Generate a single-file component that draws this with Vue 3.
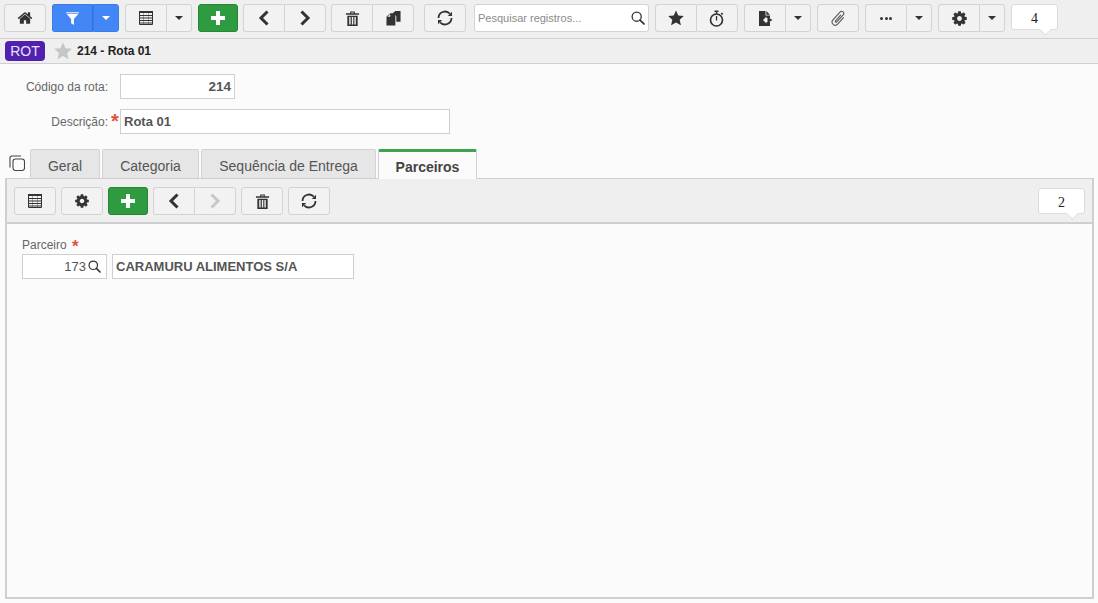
<script setup>
const tabs = [
  { label: 'Geral', width: 70 },
  { label: 'Categoria', width: 97 },
  { label: 'Sequência de Entrega', width: 175 },
  { label: 'Parceiros', width: 99, active: true }
]
</script>

<template>
  <div class="page">
    <svg class="defs" aria-hidden="true">
      <symbol id="i-home" viewBox="0 0 1792 1792"><path d="M1472 992v480q0 26-19 45t-45 19h-384v-384h-256v384h-384q-26 0-45-19t-19-45v-480q0-1 .5-3t.5-3l575-474 575 474q1 2 1 6zm223-69l-62 74q-8 9-21 11h-3q-13 0-21-7l-692-577-692 577q-12 8-24 7-13-2-21-11l-62-74q-8-10-7-23.5t11-21.5l719-599q32-26 76-26t76 26l244 204v-195q0-14 9-23t23-9h192q14 0 23 9t9 23v408l219 182q10 8 11 21.5t-7 23.5z"/></symbol>
      <symbol id="i-star" viewBox="0 0 16 16"><path d="M8 .4l2.300 5.100 5.500.6-4.100 3.700 1.200 5.500L8 12.500l-4.900 2.800 1.200-5.500L.2 6.100l5.500-.6z"/></symbol>
      <symbol id="i-cog" viewBox="0 0 1792 1792"><path d="M1152 896q0-106-75-181t-181-75-181 75-75 181 75 181 181 75 181-75 75-181zm512-109v222q0 12-8 23t-20 13l-185 28q-19 54-39 91 35 50 107 138 10 12 10 25t-9 23q-27 37-99 108t-94 71q-12 0-26-9l-138-108q-44 23-91 38-16 136-29 186-7 28-36 28h-222q-14 0-24.5-8.5t-11.5-21.5l-28-184q-49-16-90-37l-141 107q-10 9-25 9-14 0-25-11-126-114-165-168-7-10-7-23 0-12 8-23 15-21 51-66.5t54-70.5q-27-50-41-99l-183-27q-13-2-21-12.5t-8-23.5v-222q0-12 8-23t19-13l186-28q14-46 39-92-40-57-107-138-10-12-10-24 0-10 9-23 26-36 98.5-107.5t94.5-71.5q13 0 26 10l138 107q44-23 91-38 16-136 29-186 7-28 36-28h222q14 0 24.5 8.5t11.5 21.5l28 184q49 16 90 37l142-107q9-9 24-9 13 0 25 10 129 119 165 170 7 8 7 22 0 12-8 23-15 21-51 66.5t-54 70.5q26 50 41 98l183 28q13 2 21 12.5t8 23.5z"/></symbol>
      <symbol id="i-table" viewBox="0 0 14 14"><path d="M0 0h14v2H0z"/><path d="M.5 2v11.500h13V2M0 4.500h14M0 7h14M0 9.500h14M0 12h14" fill="none" stroke="currentColor"/><path d="M4.500 2v11M9.500 2v11" fill="none" stroke="currentColor" stroke-width=".6" opacity=".6"/></symbol>
      <symbol id="i-search" viewBox="0 0 16 16"><circle cx="6.500" cy="6.500" r="5.200" fill="none" stroke="currentColor" stroke-width="1.500"/><path d="M10.300 10.300 14.800 14.800" stroke="currentColor" stroke-width="2" stroke-linecap="round"/></symbol>
      <symbol id="i-trash" viewBox="0 0 16 16"><path d="M5.500 2.500V.5h5v2H15V4H1V2.500zM6.700 2.500h2.600V1.700H6.700z" fill-rule="evenodd"/><path fill-rule="evenodd" d="M2.500 5h11v11h-11zM4.500 6.500v8h1.500v-8zM7.300 6.500v8h1.500v-8zM10 6.500v8h1.500v-8z"/></symbol>
      <symbol id="i-refresh" viewBox="0 0 16 16"><path d="M1.500 8a6.500 6.500 0 0 1 11.300-4.300M14.500 8a6.500 6.500 0 0 1-11.300 4.300" fill="none" stroke="currentColor" stroke-width="1.800"/><path d="M15 1.800v4.200h-4.200zM1 14.200V10h4.200z"/></symbol>
      <symbol id="i-copy" viewBox="0 0 16 16"><path d="M7 2.500 10 0h5.500v11.500H11V5.500L9 3.500zM10.500 .8v2.700H7.500z"/><path d="M.5 6 4.500 2.500h5.500V15.500H.5z"/><path d="M4.500 3.200V6H1.500z" fill="#f2f2f2"/></symbol>
      <symbol id="i-timer" viewBox="0 0 16 17"><circle cx="7.500" cy="10" r="6" fill="none" stroke="currentColor" stroke-width="1.700"/><path d="M5.500 .5h4v1.600h-4zM6.800 2h1.400v2H6.800zM6.900 6h1.300v4.500H6.900zM12.800 2.500l1.500 1.300-1.100 1.200-1.500-1.300z"/></symbol>
      <symbol id="i-doc" viewBox="0 0 15 15"><path d="M1 0h6.500v4.500H12v2.500H8.500V5.500L5 9l3.500 3.500V11H12v4H1zM8.300 0 12 3.700H8.300zM9.500 6l5 3-5 3z"/></symbol>
      <symbol id="i-clip" viewBox="0 0 16 16"><g transform="rotate(42 8 8)"><path d="M11 4v8.500a3 3 0 0 1-6 0V2.500a2 2 0 0 1 4 0v9a.8 .8 0 0 1-1.600 0V4" fill="none" stroke="currentColor" stroke-width="1"/></g></symbol>
      <symbol id="i-pages" viewBox="0 0 16 16"><path d="M1 12.500V3a2 2 0 0 1 2-2h9" fill="none" stroke="currentColor" stroke-width="1.100"/><rect x="4" y="4" width="11.500" height="11.500" rx="2.500" fill="none" stroke="currentColor" stroke-width="1.100"/></symbol>
    </svg>

    <header class="toolbar">
      <button class="btn"><svg class="ic ic-home"><use href="#i-home" /></svg></button>

      <div class="group">
        <button class="btn blue">
          <svg class="ic ic-filter" viewBox="0 0 14 14"><path d="M0 0h14v1.200H0z" opacity=".7"/><path d="M.5 2h13L8.500 7.500V14l-3-2V7.500z"/></svg>
        </button>
        <button class="btn blue caret-btn"><i class="caret white"></i></button>
      </div>

      <div class="group">
        <button class="btn"><svg class="ic ic-table"><use href="#i-table" /></svg></button>
        <button class="btn caret-btn"><i class="caret"></i></button>
      </div>

      <button class="btn green"><span class="plus"></span></button>

      <div class="group near">
        <button class="btn"><svg class="ic chev" viewBox="0 0 12 16"><path d="M9.500 1.500 3 8l6.500 6.500" /></svg></button>
        <button class="btn wide"><svg class="ic chev" viewBox="0 0 12 16"><path d="M2.500 1.500 9 8l-6.500 6.500" /></svg></button>
      </div>

      <div class="group near">
        <button class="btn"><svg class="ic ic-trash"><use href="#i-trash" /></svg></button>
        <button class="btn wide"><svg class="ic ic-copy"><use href="#i-copy" /></svg></button>
      </div>

      <button class="btn far"><svg class="ic ic-refresh"><use href="#i-refresh" /></svg></button>

      <div class="search">
        <span class="placeholder">Pesquisar registros...</span>
        <svg class="ic ic-search"><use href="#i-search" /></svg>
      </div>

      <div class="group">
        <button class="btn"><svg class="ic ic-bigstar"><use href="#i-star" /></svg></button>
        <button class="btn wide"><svg class="ic ic-timer"><use href="#i-timer" /></svg></button>
      </div>

      <div class="group">
        <button class="btn"><svg class="ic ic-doc"><use href="#i-doc" /></svg></button>
        <button class="btn caret-btn"><i class="caret"></i></button>
      </div>

      <button class="btn"><svg class="ic ic-clip"><use href="#i-clip" /></svg></button>

      <div class="group">
        <button class="btn"><span class="dots"><i></i><i></i><i></i></span></button>
        <button class="btn caret-btn"><i class="caret"></i></button>
      </div>

      <div class="group">
        <button class="btn"><svg class="ic ic-cog"><use href="#i-cog" /></svg></button>
        <button class="btn caret-btn"><i class="caret"></i></button>
      </div>

      <div class="count">4</div>
    </header>

    <div class="titlebar">
      <span class="tag">ROT</span>
      <svg class="title-star"><use href="#i-star" /></svg>
      <span class="title">214 - Rota 01</span>
    </div>

    <main class="content">
      <div class="form">
        <div class="row">
          <label class="label">Código da rota:</label>
          <span class="req"></span>
          <div class="input code">214</div>
        </div>
        <div class="row">
          <label class="label">Descrição:</label>
          <span class="req">*</span>
          <div class="input desc">Rota 01</div>
        </div>
      </div>

      <nav class="tabs">
        <svg class="pages"><use href="#i-pages" /></svg>
        <div
          v-for="tab in tabs"
          :key="tab.label"
          class="tab"
          :class="{ active: tab.active }"
          :style="{ width: tab.width + 'px' }"
        >{{ tab.label }}</div>
      </nav>

      <section class="panel">
        <div class="panel-bar">
          <button class="btn"><svg class="ic ic-table"><use href="#i-table" /></svg></button>
          <button class="btn"><svg class="ic ic-cog small"><use href="#i-cog" /></svg></button>
          <button class="btn green"><span class="plus"></span></button>
          <div class="group">
            <button class="btn"><svg class="ic chev" viewBox="0 0 12 16"><path d="M9.500 1.500 3 8l6.500 6.500" /></svg></button>
            <button class="btn wide"><svg class="ic chev off" viewBox="0 0 12 16"><path d="M2.500 1.500 9 8l-6.500 6.500" /></svg></button>
          </div>
          <button class="btn"><svg class="ic ic-trash"><use href="#i-trash" /></svg></button>
          <button class="btn"><svg class="ic ic-refresh"><use href="#i-refresh" /></svg></button>
          <div class="count panel-count">2</div>
        </div>
        <div class="panel-body">
          <div class="field-label">Parceiro <span class="req-inline">*</span></div>
          <div class="field-row">
            <div class="input partner-code">
              <span>173</span>
              <svg class="ic ic-lens"><use href="#i-search" /></svg>
            </div>
            <div class="input partner-name">CARAMURU ALIMENTOS S/A</div>
          </div>
        </div>
      </section>
    </main>
  </div>
</template>

<style>
html, body { margin: 0; background: #fbfbfb; }
</style>

<style scoped>
.page {
  width: 1098px;
  height: 603px;
  overflow: hidden;
  display: flex;
  flex-direction: column;
  background: #fbfbfb;
  font-family: "Liberation Sans", Arial, sans-serif;
  color: #555;
}
.defs { position: absolute; width: 0; height: 0; }

.toolbar {
  box-sizing: border-box;
  flex: none;
  display: flex;
  align-items: flex-start;
  gap: 6px;
  padding: 4px 0 0 4px;
  background: #efefef;
  border-bottom: 1px solid #cfcfcf;
  height: 39px;
}
.group { display: flex; }
.near { margin-left: -1px; }
.far { margin-left: 4px; }

.btn {
  width: 42px;
  height: 28px;
  box-sizing: border-box;
  padding: 0;
  display: flex;
  align-items: center;
  justify-content: center;
  background: #f2f2f2;
  border: 1px solid #d3d3d3;
  border-radius: 3px;
  color: #333;
  flex: none;
}
.group .btn:first-child { border-radius: 3px 0 0 3px; border-right: none; width: 41px; }
.group .btn:last-child { border-radius: 0 3px 3px 0; }
.group .btn.wide { width: 42px; }
.group .btn.caret-btn { width: 26px; }
.btn.blue { background: #4287f5; border-color: #3b7de6; color: #fff; }
.group .btn.blue:first-child { border-right: 1px solid #3272d8; }
.btn.green { width: 40px; background: #2f9b40; border-color: #278636; }

.ic { display: block; fill: currentColor; flex: none; }
.ic-home { width: 16px; height: 16px; }
.ic-filter { width: 13px; height: 13px; }
.ic-table { width: 14px; height: 14px; }
.ic-trash { width: 15px; height: 15px; }
.ic-copy { width: 15px; height: 15px; }
.ic-refresh { width: 16px; height: 16px; }
.ic-bigstar { width: 16px; height: 16px; }
.ic-timer { width: 16px; height: 17px; }
.ic-doc { width: 15px; height: 15px; }
.ic-clip { width: 17px; height: 17px; color: #555; }
.ic-cog { width: 17px; height: 17px; }
.ic-cog.small { width: 16px; height: 16px; }
.chev { width: 12px; height: 16px; fill: none; stroke: #333; stroke-width: 3; }
.chev.off { stroke: #c8c8c8; }

.caret {
  width: 0;
  height: 0;
  border-left: 4px solid transparent;
  border-right: 4px solid transparent;
  border-top: 4px solid #333;
}
.caret.white { border-top-color: #fff; }

.plus { position: relative; width: 14px; height: 14px; display: block; }
.plus::before, .plus::after { content: ""; position: absolute; background: #fff; }
.plus::before { left: 0; right: 0; top: 5px; height: 4px; }
.plus::after { top: 0; bottom: 0; left: 5px; width: 4px; }

.dots { display: flex; gap: 1.500px; }
.dots i { width: 3px; height: 3px; border-radius: 50%; background: #333; }

.search {
  width: 175px;
  height: 28px;
  box-sizing: border-box;
  margin-left: 2px;
  padding: 0 3px;
  display: flex;
  align-items: center;
  justify-content: space-between;
  background: #fff;
  border: 1px solid #d3d3d3;
  border-radius: 3px;
}
.placeholder { font-size: 11px; color: #8a8a8a; }
.ic-search { width: 14px; height: 14px; color: #333; }

.count {
  position: relative;
  width: 47px;
  height: 26px;
  box-sizing: border-box;
  background: #fff;
  border: 1px solid #dcdcdc;
  border-radius: 3px;
  text-align: center;
  font: 14px/27px "Liberation Serif", serif;
  color: #222;
}
.count::after {
  content: "";
  position: absolute;
  right: 7px;
  bottom: -5px;
  width: 8px;
  height: 8px;
  background: #fff;
  border-right: 1px solid #dcdcdc;
  border-bottom: 1px solid #dcdcdc;
  transform: rotate(45deg);
}

.titlebar {
  height: 25px;
  box-sizing: border-box;
  flex: none;
  display: flex;
  align-items: center;
  padding: 0 0 1px 5px;
  background: #efefef;
  border-bottom: 1px solid #cfcfcf;
}
.tag {
  width: 40px;
  height: 20px;
  border-radius: 4px;
  background: #5120ae;
  color: #e9e2f7;
  font-size: 14px;
  line-height: 20px;
  text-align: center;
}
.title-star { width: 18px; height: 18px; margin-left: 9px; margin-right: 1px; fill: #c6c6c6; }
.title { margin-left: 4px; font-size: 12px; font-weight: 700; color: #222; }

.content { flex: 1; min-height: 0; display: flex; flex-direction: column; padding: 10px 4px 4px 5px; }

.form { display: flex; flex-direction: column; gap: 10px; }
.row { display: flex; align-items: center; height: 25px; }
.label { width: 103px; text-align: right; font-size: 12px; color: #666; }
.req { width: 12px; height: 25px; box-sizing: border-box; padding-left: 3px; color: #e0523c; font-size: 20px; font-weight: 700; line-height: 25px; }

.input {
  height: 25px;
  box-sizing: border-box;
  background: #fff;
  border: 1px solid #cfcfcf;
  font-size: 13px;
  font-weight: 700;
  line-height: 23px;
  color: #555;
}
.code { width: 115px; text-align: right; padding-right: 3px; font-size: 13.500px; }
.desc { width: 330px; padding-left: 3px; }

.tabs { display: flex; align-items: flex-end; gap: 2px; height: 29px; margin-top: 15px; padding-left: 4px; position: relative; z-index: 1; }
.pages { width: 16px; height: 16px; fill: none; color: #444; margin: 0 3px 7px 0; align-self: flex-end; }
.tab {
  height: 29px;
  box-sizing: border-box;
  text-align: center;
  font-size: 14px;
  line-height: 33px;
  color: #555;
  background: #e6e6e6;
  border: 1px solid #d3d3d3;
  border-bottom: none;
  border-radius: 2px 2px 0 0;
}
.tab.active {
  height: 30px;
  margin-bottom: -1px;
  background: #fbfbfb;
  border-top: 3px solid #3fa34d;
  font-weight: 700;
  color: #444;
  line-height: 30px;
}

.panel {
  flex: 1;
  min-height: 0;
  display: flex;
  flex-direction: column;
  border: 2px solid #cfcfcf;
  border-top-width: 1px;
}
.panel-bar {
  flex: none;
  height: 45px;
  box-sizing: border-box;
  display: flex;
  align-items: flex-start;
  gap: 5px;
  padding: 8px 0 0 7px;
  background: #efefef;
  border-bottom: 2px solid #cfcfcf;
}
.panel-count { margin: 1px 7px 0 auto; }
.panel-body { flex: 1; padding: 13px 15px; }
.field-label { font-size: 12px; color: #666; line-height: 16px; }
.req-inline { color: #e0523c; font-size: 17px; font-weight: 700; line-height: 12px; margin-left: 2px; vertical-align: -3px; }
.field-row { display: flex; gap: 5px; margin-top: 1px; }
.partner-code {
  width: 85px;
  display: flex;
  align-items: center;
  justify-content: flex-end;
  gap: 2px;
  padding-right: 5px;
  font-weight: 400;
}
.ic-lens { width: 13px; height: 13px; color: #333; }
.partner-name { width: 242px; padding-left: 3px; }
</style>
